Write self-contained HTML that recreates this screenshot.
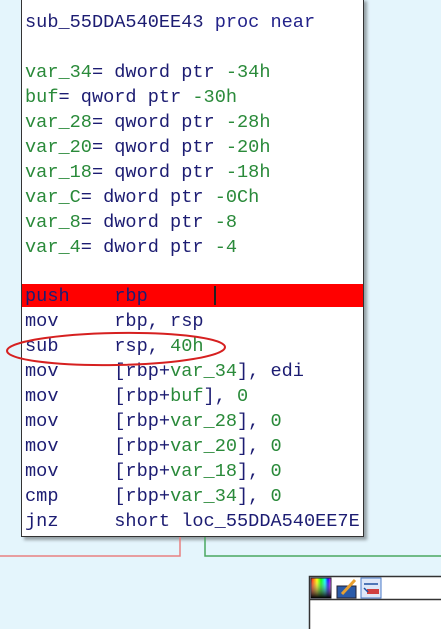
<!DOCTYPE html>
<html><head><meta charset="utf-8"><style>
html,body{margin:0;padding:0}
body{width:441px;height:629px;background:#e4f5fc;position:relative;overflow:hidden}
.box{position:absolute;left:21px;top:-2px;width:341px;height:537px;background:#fff;border:1.5px solid #333;box-shadow:3px 3px 3px rgba(0,0,0,.35)}
pre{position:absolute;left:25px;top:11px;margin:0;font-family:"Liberation Mono",monospace;font-size:18.6px;line-height:24.95px;color:#1c1c72;letter-spacing:0}
.g{color:#2a8a3a}
.n{color:#23238a}
.red{position:absolute;left:22px;top:284px;width:341px;height:23px;background:#ff0000}
.cur{position:absolute;left:214px;top:286px;width:2px;height:19px;background:#222}
</style></head><body>
<div class="box"></div>
<div class="red"></div>
<div class="cur"></div>
<pre>sub_55DDA540EE43 <span class="n">proc near</span>

<span class="g">var_34</span>= dword ptr <span class="g">-34h</span>
<span class="g">buf</span>= qword ptr <span class="g">-30h</span>
<span class="g">var_28</span>= qword ptr <span class="g">-28h</span>
<span class="g">var_20</span>= qword ptr <span class="g">-20h</span>
<span class="g">var_18</span>= qword ptr <span class="g">-18h</span>
<span class="g">var_C</span>= dword ptr <span class="g">-0Ch</span>
<span class="g">var_8</span>= dword ptr <span class="g">-8</span>
<span class="g">var_4</span>= dword ptr <span class="g">-4</span>

push    rbp
mov     rbp, rsp
sub     rsp, <span class="g">40h</span>
mov     [rbp+<span class="g">var_34</span>], edi
mov     [rbp+<span class="g">buf</span>], <span class="g">0</span>
mov     [rbp+<span class="g">var_28</span>], <span class="g">0</span>
mov     [rbp+<span class="g">var_20</span>], <span class="g">0</span>
mov     [rbp+<span class="g">var_18</span>], <span class="g">0</span>
cmp     [rbp+<span class="g">var_34</span>], <span class="g">0</span>
jnz     short loc_55DDA540EE7E</pre>
<svg style="position:absolute;left:0;top:0" width="441" height="629">
<ellipse cx="116" cy="349" rx="109" ry="16" fill="none" stroke="#d62020" stroke-width="2" transform="rotate(-1 116 349)"/>
<polyline points="180,537 180,556 0,556" fill="none" stroke="#e88080" stroke-width="1.5"/>
<polyline points="205,537 205,556 441,556" fill="none" stroke="#4aa860" stroke-width="1.5"/>
<rect x="309.5" y="576.5" width="140" height="60" fill="#fff" stroke="#333" stroke-width="1.5"/>
<line x1="309" y1="599.5" x2="441" y2="599.5" stroke="#333" stroke-width="1.5"/>
<defs><linearGradient id="rb" x1="0" x2="1"><stop offset="0" stop-color="#f00"/><stop offset=".3" stop-color="#ff0"/><stop offset=".5" stop-color="#0f0"/><stop offset=".7" stop-color="#0ff"/><stop offset=".85" stop-color="#00f"/><stop offset="1" stop-color="#f0f"/></linearGradient>
<linearGradient id="dk" x1="0" y1="0" x2="0" y2="1"><stop offset="0" stop-color="#fff" stop-opacity="0"/><stop offset="1" stop-color="#000"/></linearGradient></defs>
<rect x="311" y="578" width="20" height="20" fill="url(#rb)" stroke="#223" />
<rect x="311" y="578" width="20" height="20" fill="url(#dk)"/>
<rect x="337" y="586" width="19" height="12" fill="#2a5aa8" stroke="#223"/>
<line x1="342" y1="594" x2="355" y2="580" stroke="#e8a030" stroke-width="3"/>
<rect x="361" y="578" width="20" height="20" fill="#dfe8f8" stroke="#4a7ac8"/>
<rect x="367" y="589" width="12" height="5" fill="#d04040"/>
<path d="M364 584h14M364 588l4 4" stroke="#2050a0" stroke-width="1.5" fill="none"/>
</svg>
</body></html>
